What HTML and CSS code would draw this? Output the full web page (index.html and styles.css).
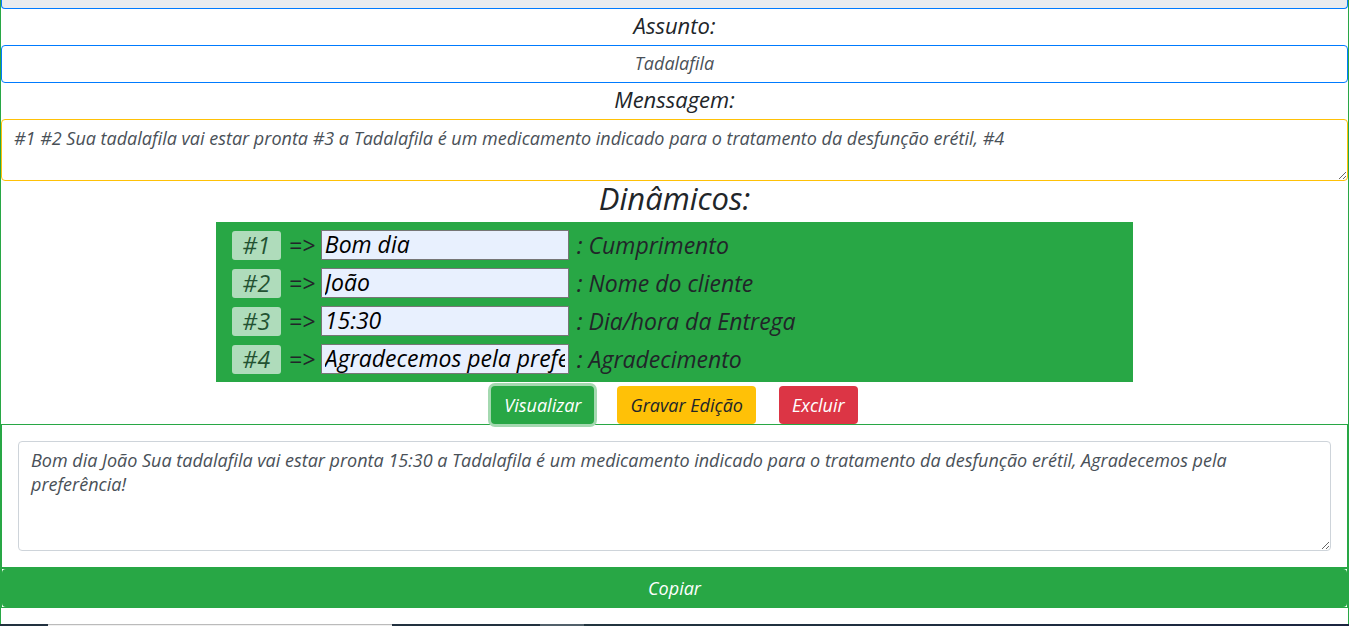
FILE: index.html
```html
<!DOCTYPE html>
<html lang="pt-br">
<head>
<meta charset="utf-8">
<title>Mensagens</title>
<link rel="stylesheet" href="styles.css">
</head>
<body>
<main class="page">
  <input class="field field-cut" type="text" aria-label="Identificador" disabled>
  <label class="title" for="assunto">Assunto:</label>
  <input class="field" id="assunto" type="text" value="Tadalafila">
  <label class="title" for="mensagem">Menssagem:</label>
  <textarea class="area area-warning" id="mensagem">#1 #2 Sua tadalafila vai estar pronta #3 a Tadalafila é um medicamento indicado para o tratamento da desfunção erétil, #4</textarea>
  <h2 class="heading">Dinâmicos:</h2>
  <section class="panel">
    <div class="row"><button class="tag" type="button" disabled>#1</button><span>=&gt;</span><input class="value" id="d1" type="text" value="Bom dia"><label for="d1">: Cumprimento</label></div>
    <div class="row"><button class="tag" type="button" disabled>#2</button><span>=&gt;</span><input class="value" id="d2" type="text" value="João"><label for="d2">: Nome do cliente</label></div>
    <div class="row"><button class="tag" type="button" disabled>#3</button><span>=&gt;</span><input class="value" id="d3" type="text" value="15:30"><label for="d3">: Dia/hora da Entrega</label></div>
    <div class="row"><button class="tag" type="button" disabled>#4</button><span>=&gt;</span><input class="value" id="d4" type="text" value="Agradecemos pela preferência!"><label for="d4">: Agradecimento</label></div>
  </section>
  <div class="actions">
    <button class="btn btn-success focused" type="button">Visualizar</button>
    <button class="btn btn-warning" type="button">Gravar Edição</button>
    <button class="btn btn-danger" type="button">Excluir</button>
  </div>
  <section class="card">
    <textarea class="area area-result" aria-label="Resultado">Bom dia João Sua tadalafila vai estar pronta 15:30 a Tadalafila é um medicamento indicado para o tratamento da desfunção erétil, Agradecemos pela preferência!</textarea>
  </section>
  <div class="copy"><button class="btn btn-success btn-block" type="button">Copiar</button></div>
</main>
<footer class="bar"><span class="bar-search"></span><span class="bar-space"></span><span class="bar-app"></span><span class="bar-edge"></span></footer>
</body>
</html>
```
FILE: styles.css
```css
* { box-sizing: border-box; }

body {
  display: flex;
  flex-direction: column;
  min-height: 100vh;
  margin: 0;
  background: #fff;
  color: #212529;
  font-family: "Ink Free", "Open Sans", sans-serif;
  font-style: italic;
  font-size: 18px;
  line-height: 24px;
}

input, textarea, button { font: inherit; }

.page {
  display: flex;
  flex: 1;
  flex-direction: column;
  border: solid #28a745;
  border-width: 0 1px;
}

.field {
  width: 100%;
  height: 38px;
  padding: 5px 12px 7px;
  border: 1px solid #007bff;
  border-radius: 4px;
  background: #fff;
  color: #495057;
  text-align: center;
}

.field-cut {
  height: 9px;
  padding: 0;
  border-top: 0;
  border-radius: 0 0 4px 4px;
  background: #e9ecef;
}

.title {
  height: 36px;
  font-size: 22px;
  line-height: 32px;
  text-align: center;
}

.area {
  display: block;
  width: 100%;
  padding: 6px 12px;
  border: 1px solid #ced4da;
  border-radius: 4px;
  background: #fff;
  color: #495057;
  resize: vertical;
}

.area-warning { height: 62px; border-color: #ffc107; }
.area-result { height: 110px; }

.heading {
  height: 41px;
  margin: 0;
  font-size: 31px;
  font-weight: 400;
  line-height: 34px;
  text-align: center;
}

.panel {
  width: 68.1%;
  margin: 0 auto;
  padding: 4px 16px;
  background: #28a745;
  font-size: 23px;
}

.row {
  display: flex;
  align-items: center;
  gap: 8px;
  height: 38px;
}

.row span { width: 24px; }

.tag {
  width: 49px;
  height: 29px;
  padding: 0;
  border: 0;
  border-radius: 3px;
  background: #f8f9fa;
  color: #212529;
  opacity: 0.65;
}

.value {
  width: 248px;
  height: 30px;
  padding: 0 3px 2px;
  border: 1px solid #767676;
  background: #e8f0fe;
  color: #000;
}

.actions {
  display: flex;
  justify-content: center;
  gap: 23px;
  padding-top: 4px;
}

.btn {
  height: 38px;
  padding: 0 13px;
  border: 0;
  border-radius: 4px;
  color: #fff;
}

.btn-success { background: #28a745; }
.btn-warning { background: #ffc107; color: #212529; }
.btn-danger { background: #dc3545; }
.btn-block { display: block; width: 100%; }

.focused {
  z-index: 1;
  box-shadow: 0 0 0 3px #a4d9b0;
}

.card {
  padding: 16px;
  border: 1px solid #28a745;
}

.copy { border: 1px solid #28a745; }

.bar {
  display: flex;
  height: 2px;
  background: #22313f;
}

.bar-search {
  width: 344px;
  margin-left: 48px;
  border-top: 1px solid #bbb;
  background: #f0f0f0;
}

.bar-space { width: 148px; }
.bar-app { width: 44px; background: #51606a; }
.bar-edge { flex: 1; background: linear-gradient(90deg, #22353f, #1b2540); }
```
